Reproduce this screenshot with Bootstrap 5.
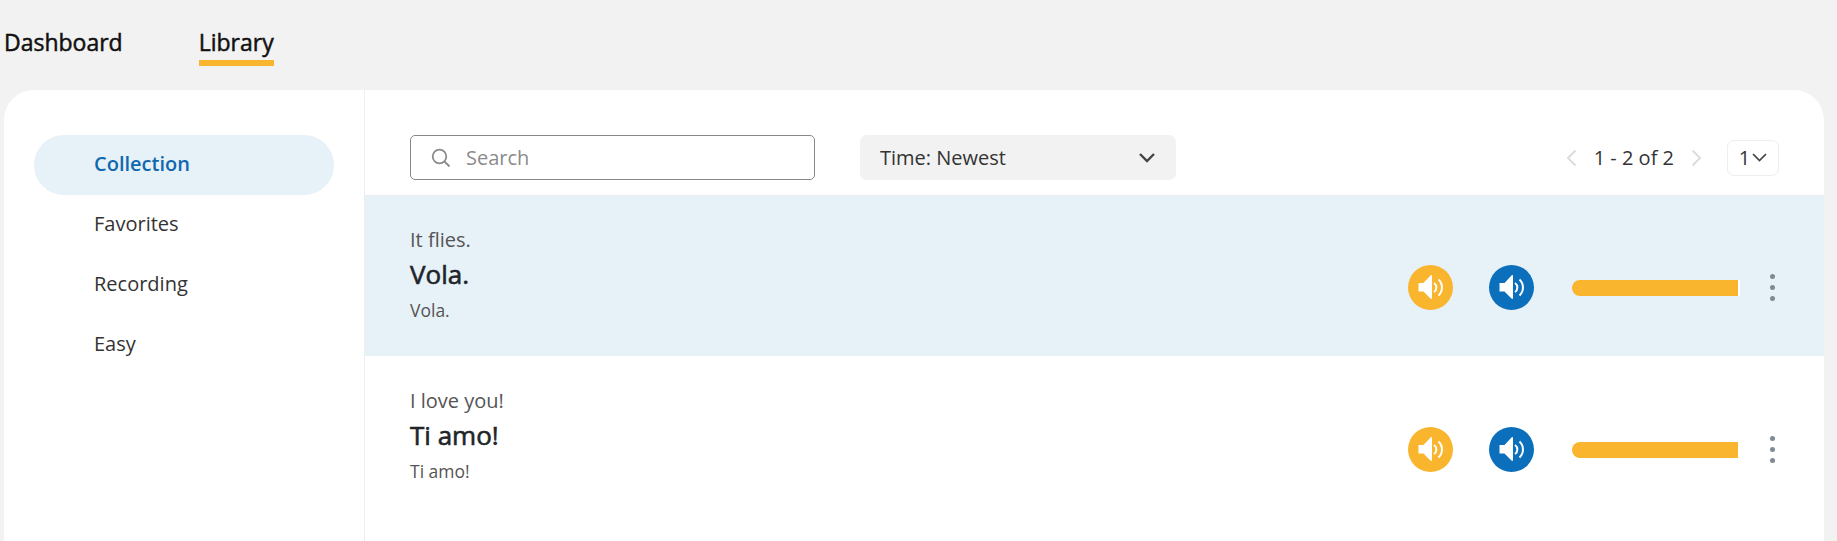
<!DOCTYPE html>
<html lang="en">
<head>
  <meta charset="UTF-8" />
  <title>Library</title>
  <link href="https://cdn.jsdelivr.net/npm/bootstrap@5.3.3/dist/css/bootstrap.min.css" rel="stylesheet">
  <style>
    html, body { height: 100%; }
    body {
      background: #f2f2f2;
      font-family: "Open Sans", sans-serif;
      color: #212529;
      overflow: hidden;
    }
    .top-tabs { padding: 26px 0 0 4px; gap: 76px; height: 90px; }
    .top-tab {
      font-size: 23px;
      -webkit-text-stroke: 0.5px #111;
      line-height: 32px;
      color: #111;
      text-decoration: none;
      height: 40px;
    }
    .top-tab.on { border-bottom: 6px solid #f9b52d; }
    .panel {
      margin: 0 13px 0 4px;
      background: #fff;
      border-radius: 30px 30px 0 0;
      height: 451px;
      overflow: hidden;
    }
    .side { width: 361px; padding: 45px 30px; border-right: 1px solid #eee; flex: none; }
    .side-link {
      display: block;
      height: 60px;
      line-height: 58px;
      padding-left: 60px;
      font-size: 20px;
      color: #333;
      text-decoration: none;
      border-radius: 30px;
    }
    .side-link.on { background: #e7f1f8; color: #0f69af; font-weight: 600; }
    .tools { height: 105px; padding: 45px 45px 0 45px; }
    .search-box {
      width: 405px;
      height: 45px;
      border: 1px solid #888;
      border-radius: 5px;
      padding-left: 19px;
      gap: 14px;
      color: #8b8b8b;
      font-size: 20px;
    }
    .time-sel {
      width: 316px;
      height: 45px;
      margin-left: 45px;
      background: #f2f2f2;
      border-radius: 7px;
      padding: 0 20px;
      font-size: 20px;
      color: #333;
    }
    .pager { font-size: 20px; color: #333; gap: 17px; }
    .page-sel {
      width: 52px;
      height: 36px;
      margin-left: 25px;
      border: 1px solid #eee;
      border-radius: 7px;
      font-size: 20px;
      color: #333;
      gap: 2px;
    }
    .item {
      height: 160px;
      padding: 0 49px 0 45px;
      border-top: 1px solid #e8eef2;
    }
    .item + .item { height: 162px; padding-top: 2px; }
    .item.on { background: #e7f1f8; }
    .item-text { padding-top: 30px; }
    .item + .item .item-text { padding-top: 29px; }
    .txt-en { font-size: 20px; color: #555; line-height: 28px; }
    .txt-main {
      font-size: 26px;
      -webkit-text-stroke: 0.6px #212529;
      color: #212529;
      line-height: 34px;
      margin: 3px 0 7px;
    }
    .txt-sub { font-size: 17.5px; color: #555; line-height: 24px; }
    .round-btn {
      width: 45px;
      height: 45px;
      border-radius: 50%;
      flex: none;
    }
    .round-btn.slow { background: #f9b52d; margin-right: 36px; }
    .round-btn.norm { background: #0b6fbb; margin-right: 38px; }
    .score-bar {
      width: 168px;
      height: 16px;
      background: #f9b52d;
      border-right: 2px solid #fff;
      border-radius: 8px 0 0 8px;
    }
    .dots { margin-left: 30px; gap: 6px; }
    .dots i { display: block; width: 5px; height: 5px; border-radius: 50%; background: #7f8a94; }
  </style>
</head>
<body>
  <div class="top-tabs d-flex">
    <a class="top-tab" href="#">Dashboard</a>
    <a class="top-tab on" href="#">Library</a>
  </div>

  <div class="panel d-flex">
    <div class="side">
      <a class="side-link on" href="#">Collection</a>
      <a class="side-link" href="#">Favorites</a>
      <a class="side-link" href="#">Recording</a>
      <a class="side-link" href="#">Easy</a>
    </div>

    <div class="flex-grow-1">
      <div class="tools d-flex align-items-start">
        <div class="search-box d-flex align-items-center">
          <svg width="22" height="22" viewBox="0 0 22 22" fill="none" stroke="#8b8b8b" stroke-width="1.8"><circle cx="9.5" cy="9.5" r="6.8"/><path d="M14.5 14.5l5 5"/></svg>
          <span>Search</span>
        </div>
        <div class="time-sel d-flex align-items-center justify-content-between">
          <span>Time: Newest</span>
          <svg width="18" height="11" viewBox="0 0 18 11" fill="none" stroke="#444" stroke-width="2.4"><path d="M2 2l7 7 7-7"/></svg>
        </div>
        <div class="ms-auto d-flex align-items-center" style="height:45px">
          <div class="pager d-flex align-items-center">
            <svg width="11" height="18" viewBox="0 0 11 18" fill="none" stroke="#dcdcdc" stroke-width="2"><path d="M9.5 1.5L2 9l7.5 7.5"/></svg>
            <span>1 - 2 of 2</span>
            <svg width="11" height="18" viewBox="0 0 11 18" fill="none" stroke="#dcdcdc" stroke-width="2"><path d="M1.5 1.5L9 9l-7.5 7.5"/></svg>
          </div>
          <div class="page-sel d-flex align-items-center justify-content-center">
            <span>1</span>
            <svg width="15" height="9" viewBox="0 0 15 9" fill="none" stroke="#444" stroke-width="1.7"><path d="M1 1l6.5 6.5L14 1"/></svg>
          </div>
        </div>
      </div>

      <div class="item on d-flex">
        <div class="item-text">
          <div class="txt-en">It flies.</div>
          <div class="txt-main">Vola.</div>
          <div class="txt-sub">Vola.</div>
        </div>
        <div class="ms-auto mt-4 d-flex align-items-center">
          <div class="round-btn slow d-flex align-items-center justify-content-center">
            <svg width="31" height="29" viewBox="-1.5 0 31 29" fill="none" stroke="#fff"><path d="M2 10h5l7-7.500c1-.8 1.500-.5 1.500.5v22c0 1-.5 1.300-1.500.5L7 18.500H2z" fill="#fff" stroke="none"/><path d="M17.500 10a5.500 5.500 0 0 1 0 9" stroke-width="2"/><path d="M22 6.500a11 11 0 0 1 0 16" stroke-width="2"/></svg>
          </div>
          <div class="round-btn norm d-flex align-items-center justify-content-center">
            <svg width="31" height="29" viewBox="-1.5 0 31 29" fill="none" stroke="#fff"><path d="M2 10h5l7-7.500c1-.8 1.500-.5 1.500.5v22c0 1-.5 1.300-1.500.5L7 18.500H2z" fill="#fff" stroke="none"/><path d="M17.500 10a5.500 5.500 0 0 1 0 9" stroke-width="2"/><path d="M22 6.500a11 11 0 0 1 0 16" stroke-width="2"/></svg>
          </div>
          <div class="score-bar"></div>
          <div class="dots d-flex flex-column"><i></i><i></i><i></i></div>
        </div>
      </div>

      <div class="item d-flex">
        <div class="item-text">
          <div class="txt-en">I love you!</div>
          <div class="txt-main">Ti amo!</div>
          <div class="txt-sub">Ti amo!</div>
        </div>
        <div class="ms-auto mt-4 d-flex align-items-center">
          <div class="round-btn slow d-flex align-items-center justify-content-center">
            <svg width="31" height="29" viewBox="-1.5 0 31 29" fill="none" stroke="#fff"><path d="M2 10h5l7-7.500c1-.8 1.500-.5 1.500.5v22c0 1-.5 1.300-1.500.5L7 18.500H2z" fill="#fff" stroke="none"/><path d="M17.500 10a5.500 5.500 0 0 1 0 9" stroke-width="2"/><path d="M22 6.500a11 11 0 0 1 0 16" stroke-width="2"/></svg>
          </div>
          <div class="round-btn norm d-flex align-items-center justify-content-center">
            <svg width="31" height="29" viewBox="-1.5 0 31 29" fill="none" stroke="#fff"><path d="M2 10h5l7-7.500c1-.8 1.500-.5 1.500.5v22c0 1-.5 1.300-1.500.5L7 18.500H2z" fill="#fff" stroke="none"/><path d="M17.500 10a5.500 5.500 0 0 1 0 9" stroke-width="2"/><path d="M22 6.500a11 11 0 0 1 0 16" stroke-width="2"/></svg>
          </div>
          <div class="score-bar"></div>
          <div class="dots d-flex flex-column"><i></i><i></i><i></i></div>
        </div>
      </div>
    </div>
  </div>

  <script src="https://cdn.jsdelivr.net/npm/bootstrap@5.3.3/dist/js/bootstrap.bundle.min.js"></script>
</body>
</html>
